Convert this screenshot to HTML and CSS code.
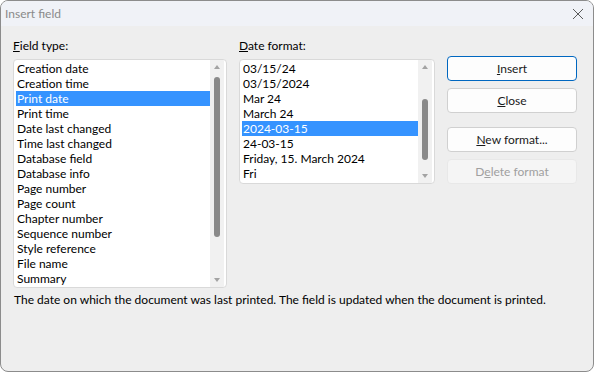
FILE: index.html
```html
<!DOCTYPE html>
<html lang="en">
<head>
    <meta charset="UTF-8">
    <title>Insert field</title>
    <link rel="stylesheet" href="styles.css">
</head>
<body>
    <div class="window">
        <div class="titlebar">
            <span class="title">Insert field</span>
            <svg class="close" width="12" height="12" viewBox="0 0 12 12">
                <path d="M1 1 L11 11 M11 1 L1 11" stroke="#5a5a5a" stroke-width="1" fill="none"/>
            </svg>
        </div>
        <div class="content">
            <div class="main">
                <div class="col col-type">
                    <label class="label"><u>F</u>ield type:</label>
                    <div class="listbox list-type">
                        <div class="items">
                            <div class="item">Creation date</div>
                            <div class="item">Creation time</div>
                            <div class="item selected">Print date</div>
                            <div class="item">Print time</div>
                            <div class="item">Date last changed</div>
                            <div class="item">Time last changed</div>
                            <div class="item">Database field</div>
                            <div class="item">Database info</div>
                            <div class="item">Page number</div>
                            <div class="item">Page count</div>
                            <div class="item">Chapter number</div>
                            <div class="item">Sequence number</div>
                            <div class="item">Style reference</div>
                            <div class="item">File name</div>
                            <div class="item">Summary</div>
                        </div>
                        <div class="scrollbar">
                            <span class="arrow up"></span>
                            <div class="track"><div class="thumb thumb-type"></div></div>
                            <span class="arrow down"></span>
                        </div>
                    </div>
                </div>
                <div class="col col-format">
                    <label class="label"><u>D</u>ate format:</label>
                    <div class="listbox list-format">
                        <div class="items">
                            <div class="item">03/15/24</div>
                            <div class="item">03/15/2024</div>
                            <div class="item">Mar 24</div>
                            <div class="item">March 24</div>
                            <div class="item selected">2024-03-15</div>
                            <div class="item">24-03-15</div>
                            <div class="item">Friday, 15. March 2024</div>
                            <div class="item">Fri</div>
                        </div>
                        <div class="scrollbar">
                            <span class="arrow up"></span>
                            <div class="track"><div class="thumb thumb-format"></div></div>
                            <span class="arrow down"></span>
                        </div>
                    </div>
                </div>
                <div class="buttons">
                    <button class="btn default"><u>I</u>nsert</button>
                    <button class="btn"><u>C</u>lose</button>
                    <button class="btn spaced"><u>N</u>ew format...</button>
                    <button class="btn disabled" disabled>D<u>e</u>lete format</button>
                </div>
            </div>
            <p class="desc">The date on which the document was last printed. The field is updated when the document is printed.</p>
        </div>
    </div>
</body>
</html>
```

FILE: styles.css
```css
body {
    margin: 0;
    padding: 0;
    font-family: Lato, "Noto Sans", sans-serif;
    font-size: 12px;
    color: #000;
}

.window {
    width: 594px;
    height: 372px;
    box-sizing: border-box;
    border: 1px solid #8c8c8c;
    border-radius: 8px;
    overflow: hidden;
    background-color: #eeeeee;
    display: flex;
    flex-direction: column;
}

.titlebar {
    height: 25px;
    background-color: #f0f2f7;
    display: flex;
    align-items: center;
    justify-content: space-between;
    padding: 0 9px 0 4px;
    flex-shrink: 0;
}
.title {
    color: #8a8a8a;
}

.content {
    padding: 12px 16px 0 12px;
}

.main {
    display: flex;
    gap: 12px;
}

.col {
    display: flex;
    flex-direction: column;
}
.col-type {
    width: 214px;
}
.col-format {
    width: 196px;
}
.label {
    height: 15px;
    line-height: 15px;
    margin-bottom: 6px;
}

.listbox {
    box-sizing: border-box;
    border: 1px solid #d9d9d9;
    border-radius: 4px;
    background-color: #fff;
    display: flex;
    padding: 1px 2px 0 1px;
    overflow: hidden;
}
.list-type {
    height: 229px;
}
.list-format {
    height: 125px;
}
.items {
    flex: 1;
}
.item {
    height: 15px;
    line-height: 15px;
    padding-left: 1px;
    margin-left: 1px;
    white-space: nowrap;
}
.selected {
    background-color: #3593ff;
    color: #fff;
}

.scrollbar {
    width: 14px;
    background-color: #f1f1f1;
    display: flex;
    flex-direction: column;
    align-items: center;
    margin-top: -1px;
}
.arrow {
    width: 0;
    height: 0;
    border-left: 3.5px solid transparent;
    border-right: 3.5px solid transparent;
    margin: 5px 0;
}
.up {
    border-bottom: 4px solid #a3a3a3;
}
.down {
    border-top: 4px solid #a3a3a3;
}
.track {
    flex: 1;
    width: 100%;
    display: flex;
    justify-content: center;
}
.thumb {
    width: 6px;
    background-color: #8a8a8a;
    border-radius: 3px;
}
.thumb-type {
    margin-top: 3px;
    height: 160px;
}
.thumb-format {
    margin-top: 25px;
    height: 61px;
}

.buttons {
    width: 130px;
    display: flex;
    flex-direction: column;
    gap: 7px;
    padding-top: 18px;
}
.btn {
    height: 25px;
    box-sizing: border-box;
    border: 1px solid #d0d0d0;
    border-radius: 4px;
    background-color: #fdfdfd;
    font-family: inherit;
    font-size: inherit;
    color: #1a1a1a;
    padding: 0;
}
.default {
    border-color: #0067c0;
}
.spaced {
    margin-top: 7px;
}
.disabled {
    background-color: #f5f5f5;
    border-color: #e8e8e8;
    color: #a0a0a0;
}

.desc {
    margin: 4px 0 0 1px;
    line-height: 15px;
}
```
